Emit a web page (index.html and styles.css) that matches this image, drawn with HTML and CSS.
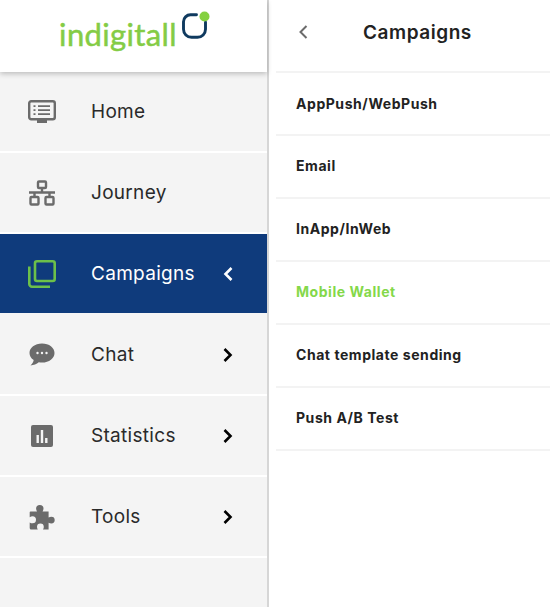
FILE: index.html
```html
<!DOCTYPE html>
<html lang="en">
<head>
<meta charset="utf-8">
<title>Campaigns</title>
<link rel="stylesheet" href="styles.css">
</head>
<body>
<div class="app">
  <aside class="sidebar">
    <header class="brand">
      <span class="brand-name">indigitall</span>
      <svg class="brand-mark" width="30" height="30" viewBox="0 0 30 30" aria-hidden="true">
        <path d="M15.500 3.800H9.500A7 7 0 0 0 2.500 10.800v7.500a8 8 0 0 0 8 8h6a8 8 0 0 0 8-8v-7" fill="none" stroke="#0f3a5f" stroke-width="2.900" stroke-linecap="round"/>
        <circle cx="23.500" cy="5.500" r="5" fill="#84d040"/>
      </svg>
    </header>
    <nav class="nav">
      <a class="nav-item">
        <svg class="nav-icon" viewBox="0 0 28 24" aria-hidden="true">
          <rect x="1.200" y="1.200" width="25.600" height="18" rx="2" fill="none" stroke="#6b6b6b" stroke-width="2.400"/>
          <path d="M10 6.200h12M10 10.200h12M10 14.200h12M5.500 6.200h2M5.500 10.200h2M5.500 14.200h2" stroke="#6b6b6b" stroke-width="1.800"/>
          <rect x="9" y="20" width="10" height="3" fill="#6b6b6b"/>
        </svg>
        <span class="nav-label">Home</span>
      </a>
      <a class="nav-item">
        <svg class="nav-icon" viewBox="0 0 28 26" aria-hidden="true">
          <g fill="none" stroke="#6b6b6b" stroke-width="2.400">
            <rect x="10" y="1.500" width="8" height="6.500" rx="1"/>
            <rect x="2.500" y="17" width="8" height="7.500" rx="1"/>
            <rect x="17.500" y="17" width="8" height="7.500" rx="1"/>
            <path d="M14 8v5M1 12.500h26M6.500 13v4M21.500 13v4"/>
          </g>
        </svg>
        <span class="nav-label">Journey</span>
      </a>
      <a class="nav-item is-active">
        <svg class="nav-icon" viewBox="0 0 28 28" aria-hidden="true">
          <g fill="none" stroke="#6cc04a" stroke-width="2.600">
            <rect x="7" y="1.300" width="19.700" height="19.700" rx="2"/>
            <path d="M1.300 6.500V24a2.700 2.700 0 0 0 2.700 2.700h18"/>
          </g>
        </svg>
        <span class="nav-label">Campaigns</span>
        <svg class="nav-chevron" viewBox="0 0 10 14" aria-hidden="true"><path d="M8.500 1 2.500 7l6 6" fill="none" stroke="#fff" stroke-width="2.600"/></svg>
      </a>
      <a class="nav-item">
        <svg class="nav-icon" viewBox="0 0 28 24" aria-hidden="true">
          <path d="M14 .5C6.800.5 1.500 4.800 1.500 10c0 2.900 1.600 5.400 4.200 7.100-.3 2-1.600 4-3.200 5.400 3.200-.3 6.100-1.500 8.300-3.200 1 .2 2.100.3 3.200.3 7.200 0 12.500-4.300 12.500-9.600S21.200.5 14 .5Z" fill="#6b6b6b"/>
          <circle cx="9.500" cy="10" r="1.200" fill="#f4f4f4"/><circle cx="14" cy="10" r="1.200" fill="#f4f4f4"/><circle cx="18.500" cy="10" r="1.200" fill="#f4f4f4"/>
        </svg>
        <span class="nav-label">Chat</span>
        <svg class="nav-chevron" viewBox="0 0 10 14" aria-hidden="true"><path d="M1.500 1l6 6-6 6" fill="none" stroke="#000" stroke-width="2.600"/></svg>
      </a>
      <a class="nav-item">
        <svg class="nav-icon" viewBox="0 0 28 24" aria-hidden="true">
          <rect x="3" y="1" width="22" height="22" rx="2" fill="#6b6b6b"/>
          <path d="M8.500 11h2.400v8H8.500zM12.800 6h2.400v13h-2.400zM17.100 14h2.400v5h-2.400z" fill="#f4f4f4"/>
        </svg>
        <span class="nav-label">Statistics</span>
        <svg class="nav-chevron" viewBox="0 0 10 14" aria-hidden="true"><path d="M1.500 1l6 6-6 6" fill="none" stroke="#000" stroke-width="2.600"/></svg>
      </a>
      <a class="nav-item">
        <svg class="nav-icon" viewBox="0 0 28 26" aria-hidden="true">
          <path d="M2.500 7.500H9c-.5-1-.9-1.800-.9-2.900a3.700 3.700 0 0 1 7.400 0c0 1.100-.4 1.900-.9 2.900h6v6c1-.5 1.700-.8 2.700-.8a3.400 3.400 0 0 1 0 6.800c-1 0-1.700-.3-2.700-.8V25.500h-5.600c.5-1 .8-1.700.8-2.600a3.400 3.400 0 0 0-6.800 0c0 .9.300 1.600.8 2.600H3.200a1.500 1.500 0 0 1-1.500-1.500v-5.600c1 .5 1.800.9 2.800.9a3.500 3.500 0 0 0 0-7c-1 0-1.800.4-2.800.9V8.300c0-.4.300-.8.800-.8Z" fill="#6b6b6b"/>
        </svg>
        <span class="nav-label">Tools</span>
        <svg class="nav-chevron" viewBox="0 0 10 14" aria-hidden="true"><path d="M1.500 1l6 6-6 6" fill="none" stroke="#000" stroke-width="2.600"/></svg>
      </a>
    </nav>
  </aside>
  <main class="panel">
    <header class="panel-head">
      <svg class="back" viewBox="0 0 10 14" aria-hidden="true"><path d="M8.500 1 2.500 7l6 6" fill="none" stroke="#6b6b6b" stroke-width="2"/></svg>
      <h1 class="panel-title">Campaigns</h1>
    </header>
    <ul class="menu">
      <li class="menu-item">AppPush/WebPush</li>
      <li class="menu-item">Email</li>
      <li class="menu-item">InApp/InWeb</li>
      <li class="menu-item is-current">Mobile Wallet</li>
      <li class="menu-item">Chat template sending</li>
      <li class="menu-item">Push A/B Test</li>
    </ul>
  </main>
</div>
</body>
</html>
```

FILE: styles.css
```css
* { box-sizing: border-box; }
html, body { margin: 0; height: 100%; }
body { font-family: Inter, "Liberation Sans", sans-serif; background: #fff; color: #222; overflow: hidden; }
.app { display: flex; height: 607px; }

.sidebar { flex: 0 0 269px; background: #f4f4f4; border-right: 2px solid #d6d6d6; display: flex; flex-direction: column; }
.brand { position: relative; z-index: 1; height: 72px; background: #fff; box-shadow: 0 2px 5px rgba(0,0,0,.22); display: flex; justify-content: center; align-items: flex-start; gap: 4px; padding-top: 11px; padding-left: 3px; }
.brand-name { font-family: Lato, sans-serif; font-size: 31px; line-height: 1; color: #84cc45; margin-top: 8px; letter-spacing: .35px; -webkit-text-stroke: .5px #84cc45; }
.brand-mark { flex: none; }

.nav { display: flex; flex-direction: column; }
.nav-item { height: 81px; border-bottom: 2px solid #fff; display: flex; align-items: center; padding-left: 28px; padding-right: 34px; color: #2a2a2a; }
.nav-item.is-active { height: 79px; margin-bottom: 2px; background: #0f3b7c; color: #fff; border-bottom: 0; }
.nav-icon { width: 28px; height: 28px; flex: none; }
.nav-label { margin-left: 35px; flex: 1; font-size: 19px; letter-spacing: .3px; }
.nav-chevron { width: 10px; height: 14px; flex: none; }

.panel { flex: 1; min-width: 0; padding-left: 7px; }
.panel-head { height: 73px; border-bottom: 2px solid #f3f3f3; display: flex; align-items: center; padding-left: 22px; }
.back { width: 10px; height: 14px; flex: none; margin-top: -7px; }
.panel-title { margin: -7px 0 0 55px; font-size: 19px; font-weight: 600; letter-spacing: .55px; color: #222; }
.menu { list-style: none; margin: 0; padding: 0; }
.menu-item { height: 63px; border-bottom: 2px solid #f3f3f3; display: flex; align-items: center; padding-left: 20px; padding-bottom: 2px; font-size: 14px; font-weight: 700; letter-spacing: .55px; color: #222; }
.menu-item:first-child { padding-bottom: 0; }
.menu-item.is-current { color: #84d84a; }
```
